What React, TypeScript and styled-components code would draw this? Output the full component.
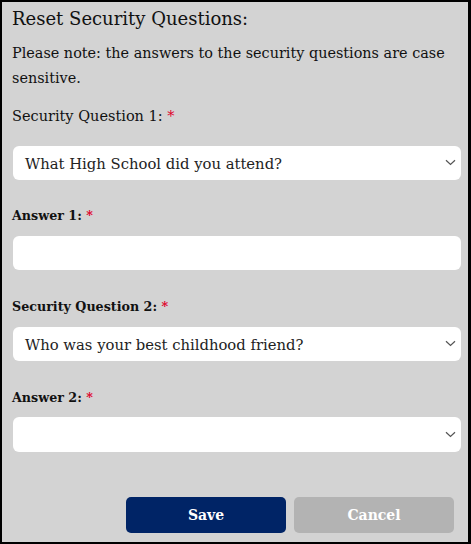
import React from "react";
import styled, { createGlobalStyle } from "styled-components";

const Global = createGlobalStyle`
  html, body { margin: 0; padding: 0; background: #d3d3d3; }
  * { box-sizing: border-box; }
`;

const Frame = styled.div`
  width: 471px;
  height: 544px;
  border: 2px solid #000;
  border-right-width: 3px;
  background: #d3d3d3;
  padding: 0 7px 0 10px;
  display: flex;
  flex-direction: column;
  font-family: "DejaVu Serif", "Liberation Serif", serif;
  color: #111;
`;

const Title = styled.h2`
  margin: 6px 0 0 0;
  font-size: 18px;
  line-height: 22px;
  font-weight: normal;
`;

const Note = styled.p`
  margin: 11px 0 0 0;
  font-size: 14.4px;
  line-height: 25px;
`;

const Label = styled.label<{ $bold?: boolean; $top: number }>`
  display: block;
  margin-top: ${(p) => p.$top}px;
  font-size: ${(p) => (p.$bold ? 12.7 : 14.5)}px;
  line-height: 20px;
  font-weight: ${(p) => (p.$bold ? "bold" : "normal")};
`;

const Star = styled.span`
  color: #e0002a;
`;

const Box = styled.div<{ $top: number; $h?: number }>`
  position: relative;
  margin: ${(p) => p.$top}px 0 0 1px;
  height: ${(p) => p.$h ?? 34}px;
  background: #fff;
  border-radius: 6px;
  display: flex;
  align-items: center;
  padding: 0 30px 0 12px;
  font-size: 14.8px;
  color: #222;
`;

const Chevron = styled.svg`
  position: absolute;
  right: 5px;
  top: 50%;
  margin-top: -4px;
`;

const Buttons = styled.div`
  margin-top: 45px;
  display: flex;
  justify-content: flex-end;
  gap: 8px;
  padding-right: 7px;
`;

const Button = styled.button<{ $primary?: boolean }>`
  width: 160px;
  height: 36px;
  border: none;
  border-radius: 5px;
  font-family: "DejaVu Serif", "Liberation Serif", serif;
  font-size: 14px;
  font-weight: bold;
  color: #fff;
  background: ${(p) => (p.$primary ? "#002466" : "#b3b3b3")};
`;

const Arrow = () => (
  <Chevron width="11" height="7" viewBox="0 0 11 7">
    <path d="M1 1.2 L5.5 5.5 L10 1.2" fill="none" stroke="#555" strokeWidth="1.2" />
  </Chevron>
);

export default function App() {
  return (
    <>
      <Global />
      <Frame>
        <Title>Reset Security Questions:</Title>
        <Note>Please note: the answers to the security questions are case sensitive.</Note>
        <Label $top={15}>
          Security Question 1: <Star>*</Star>
        </Label>
        <Box $top={20}>
          What High School did you attend?
          <Arrow />
        </Box>
        <Label $bold $top={26}>
          Answer 1: <Star>*</Star>
        </Label>
        <Box $top={10} />
        <Label $bold $top={27}>
          Security Question 2: <Star>*</Star>
        </Label>
        <Box $top={10}>
          Who was your best childhood friend?
          <Arrow />
        </Box>
        <Label $bold $top={27}>
          Answer 2: <Star>*</Star>
        </Label>
        <Box $top={9} $h={35}>
          <Arrow />
        </Box>
        <Buttons>
          <Button $primary>Save</Button>
          <Button>Cancel</Button>
        </Buttons>
      </Frame>
    </>
  );
}
